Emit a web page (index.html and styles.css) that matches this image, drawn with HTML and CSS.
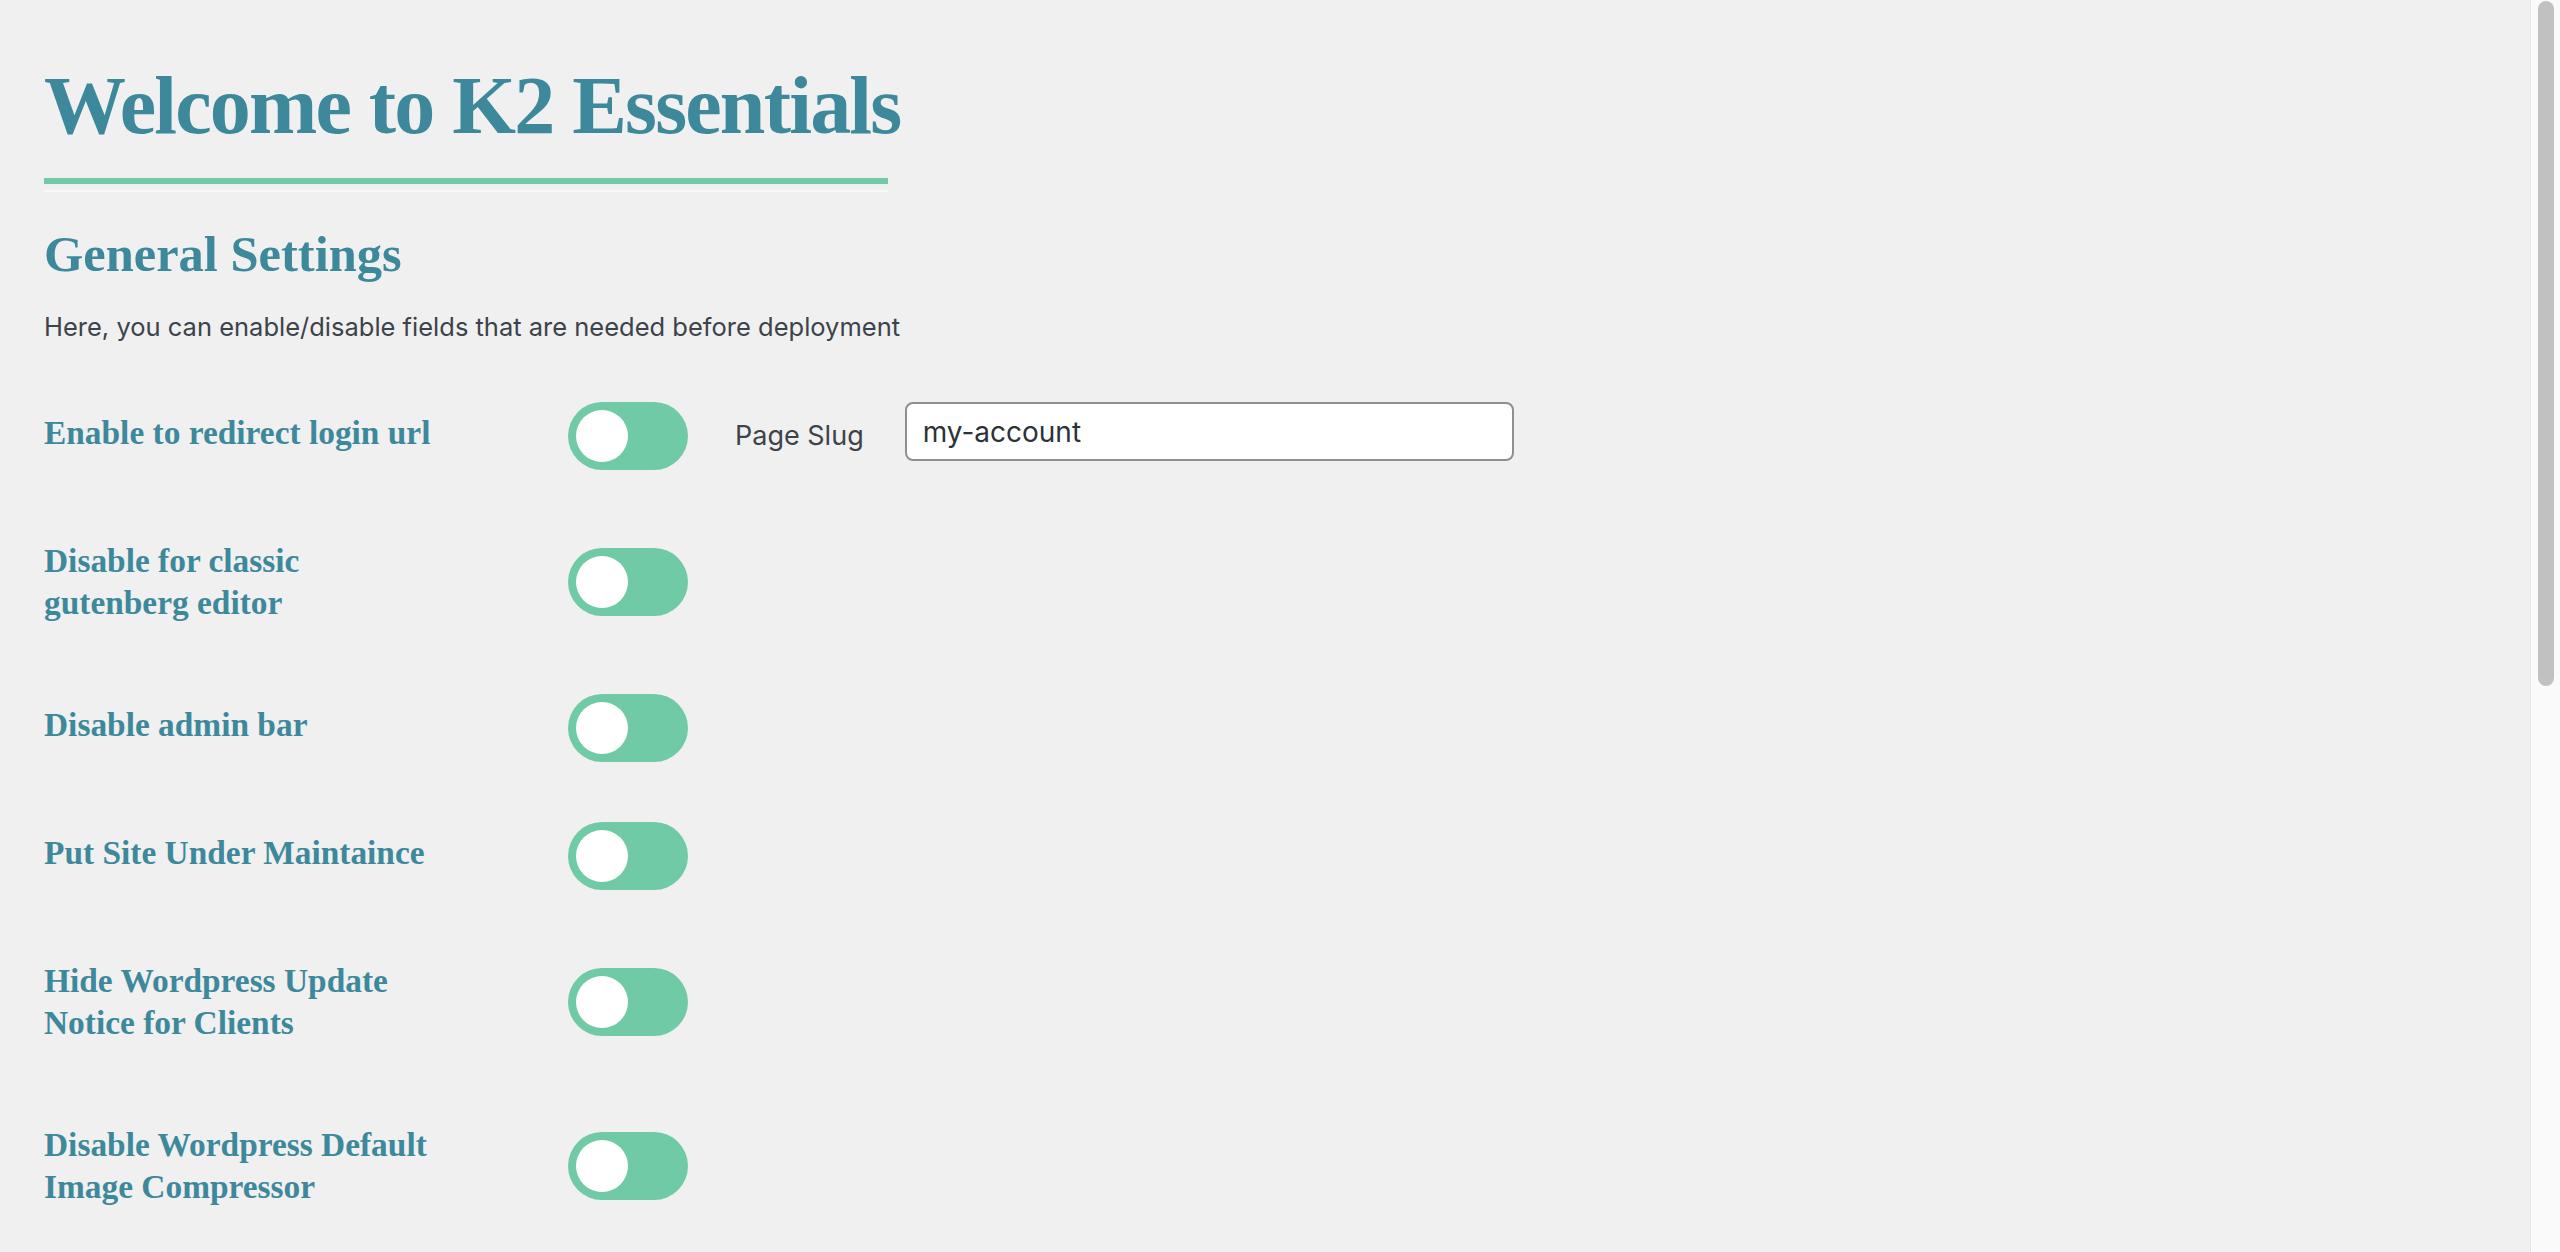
FILE: index.html
```html
<!DOCTYPE html>
<html lang="en">
<head>
<meta charset="utf-8">
<title>K2 Essentials</title>
<link rel="stylesheet" href="styles.css">
</head>
<body>
<div class="wrap">
  <h1 class="title">Welcome to K2 Essentials</h1>
  <div class="rule"></div>
  <div class="rule-light"></div>
  <h2 class="section">General Settings</h2>
  <p class="desc">Here, you can enable/disable fields that are needed before deployment</p>
  <table class="form-table">
    <tbody>
      <tr>
        <th>Enable to redirect login url</th>
        <td>
          <div class="field">
            <span class="switch"><span class="knob"></span></span>
            <span class="field-label">Page Slug</span>
            <input class="text-input" type="text" value="my-account">
          </div>
        </td>
      </tr>
      <tr>
        <th>Disable for classic gutenberg editor</th>
        <td><span class="switch"><span class="knob"></span></span></td>
      </tr>
      <tr>
        <th>Disable admin bar</th>
        <td><span class="switch"><span class="knob"></span></span></td>
      </tr>
      <tr>
        <th>Put Site Under Maintaince</th>
        <td><span class="switch"><span class="knob"></span></span></td>
      </tr>
      <tr>
        <th>Hide Wordpress Update Notice for Clients</th>
        <td><span class="switch"><span class="knob"></span></span></td>
      </tr>
      <tr>
        <th>Disable Wordpress Default Image Compressor</th>
        <td><span class="switch"><span class="knob"></span></span></td>
      </tr>
    </tbody>
  </table>
</div>
<div class="scrollbar" aria-hidden="true"><div class="scroll-thumb"></div></div>
</body>
</html>
```

FILE: styles.css
```css
html {
  background: #f0f0f1;
}
body {
  margin: 0;
  background: #f0f0f1;
  color: #3c434a;
  font-family: Inter, "Noto Sans", sans-serif;
}
.wrap {
  box-sizing: border-box;
  padding: 56px 0 200px 44px;
}
.title {
  margin: 0;
  font-family: "Liberation Serif", "Times New Roman", serif;
  font-weight: 700;
  font-size: 82px;
  letter-spacing: -1.8px;
  line-height: 100px;
  color: #3d899b;
}
.rule {
  width: 844px;
  height: 6px;
  margin-top: 22px;
  background: #6fcaa5;
}
.rule-light {
  width: 844px;
  height: 2px;
  margin-top: 6px;
  background: #f9f9f9;
}
.section {
  margin: 32px 0 0;
  font-family: "Liberation Serif", "Times New Roman", serif;
  font-weight: 700;
  font-size: 50.5px;
  line-height: 60px;
  color: #3d899b;
}
.desc {
  margin: 25px 0 0;
  font-size: 25.5px;
  line-height: 36px;
  color: #3c434a;
}
.form-table {
  margin-top: 27px;
  border-collapse: collapse;
  border-spacing: 0;
}
.form-table th {
  box-sizing: content-box;
  width: 396px;
  padding: 40px 128px 40px 0;
  text-align: left;
  vertical-align: top;
  font-family: "Liberation Serif", "Times New Roman", serif;
  font-weight: 700;
  font-size: 33.4px;
  line-height: 42px;
  color: #3d899b;
}
.form-table td {
  padding: 30px 0;
  vertical-align: middle;
}
.field {
  display: flex;
  align-items: flex-start;
}
.switch {
  display: block;
  box-sizing: border-box;
  width: 120px;
  height: 68px;
  padding: 8px;
  border-radius: 34px;
  background: #6fcaa5;
}
.knob {
  display: block;
  width: 52px;
  height: 52px;
  border-radius: 50%;
  background: #ffffff;
}
.field-label {
  margin-left: 47px;
  font-size: 27px;
  line-height: 68px;
  color: #3c434a;
}
.text-input {
  box-sizing: border-box;
  width: 609px;
  height: 59px;
  margin: 0 0 0 41px;
  padding: 0 16px;
  border: 2px solid #8c8f94;
  border-radius: 8px;
  background: #ffffff;
  font-family: Inter, "Noto Sans", sans-serif;
  font-size: 28px;
  color: #2c3338;
  outline: none;
}
.scrollbar {
  position: fixed;
  top: 0;
  right: 0;
  box-sizing: border-box;
  width: 30px;
  height: 100vh;
  padding: 1px 6px 0 7px;
  background: #fafafa;
  border-left: 1px solid #e6e6e6;
}
.scroll-thumb {
  height: 685px;
  border-radius: 8px;
  background: #c1c1c1;
}
```
